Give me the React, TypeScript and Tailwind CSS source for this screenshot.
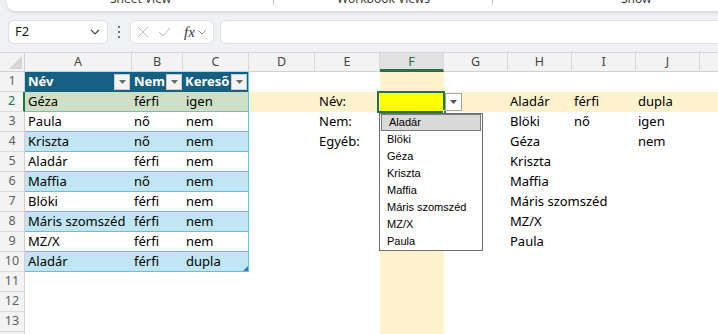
import clsx from "clsx";

const widths = [
  "w-[107px]",
  "w-[51px]",
  "w-[66px]",
  "w-[66px]",
  "w-[65px]",
  "w-[64px]",
  "w-[64px]",
  "w-[64px]",
  "w-[64px]",
  "w-[64px]",
  "w-[64px]",
];
const letters = ["A", "B", "C", "D", "E", "F", "G", "H", "I", "J", "K"];

const table = [
  ["Géza", "férfi", "igen"],
  ["Paula", "nő", "nem"],
  ["Kriszta", "nő", "nem"],
  ["Aladár", "férfi", "nem"],
  ["Maffia", "nő", "nem"],
  ["Blöki", "férfi", "nem"],
  ["Máris szomszéd", "férfi", "nem"],
  ["MZ/X", "férfi", "nem"],
  ["Aladár", "férfi", "dupla"],
];

const labels: Record<number, string> = { 2: "Név:", 3: "Nem:", 4: "Egyéb:" };
const names = ["Aladár", "Blöki", "Géza", "Kriszta", "Maffia", "Máris szomszéd", "MZ/X", "Paula"];
const colI: Record<number, string> = { 2: "férfi", 3: "nő" };
const colJ: Record<number, string> = { 2: "dupla", 3: "igen", 4: "nem" };

function Cell({ col, className, children }: { col: number; className?: string; children?: React.ReactNode }) {
  return (
    <div className={clsx("h-full shrink-0 flex items-center pl-[2px] whitespace-nowrap", widths[col], className)}>
      {children}
    </div>
  );
}

function FilterButton() {
  return (
    <span className="w-[16px] h-[16px] shrink-0 bg-[#f3f3f3] border border-[#cdcdcd] flex items-center justify-center">
      <svg width="7" height="4" viewBox="0 0 7 4">
        <path d="M0 0h7L3.5 4z" fill="#6b6b6b" />
      </svg>
    </span>
  );
}

function Row({ n }: { n: number }) {
  const inTable = n >= 2 && n <= 10;
  const data = inTable ? table[n - 2] : null;
  const band = n === 2 ? "bg-[#fff2cc]" : "";
  const tableBg =
    n === 2 ? "bg-[#cfdfc4]" : n % 2 === 0 ? "bg-[#c0e6f5]" : "bg-white";
  const tableCell = inTable ? clsx(tableBg, "border-b border-[#5fc0e8]") : "";

  return (
    <div className="flex h-[20px] shrink-0">
      <div
        className={clsx(
          "w-[25px] shrink-0 h-full bg-[#f3f3f3] border-b border-[#dcdcdc] flex items-center justify-center text-[12.5px]",
          n === 2 ? "border-r-2 border-r-[#217346] text-[#217346]" : "border-r border-r-[#d0d0d0] text-[#5f5f5f]"
        )}
      >
        {n}
      </div>
      {n === 1 ? (
        <>
          <Cell col={0} className="bg-[#156082] text-white font-bold justify-between pr-[2px] pl-[3px]">
            Név
            <FilterButton />
          </Cell>
          <Cell col={1} className="bg-[#156082] text-white font-bold justify-between pr-[1px]">
            Nem
            <FilterButton />
          </Cell>
          <Cell col={2} className="bg-[#156082] text-white font-bold justify-between pr-[1px] border-r border-[#5fc0e8]">
            Kereső
            <FilterButton />
          </Cell>
        </>
      ) : (
        <>
          <Cell col={0} className={clsx(tableCell, "pl-[3px]")}>{data?.[0]}</Cell>
          <Cell col={1} className={tableCell}>{data?.[1]}</Cell>
          <Cell
            col={2}
            className={clsx(tableCell, "pl-[3px] relative", inTable && "border-r border-r-[#5fc0e8]")}
          >
            {data?.[2]}
            {n === 10 && (
              <svg className="absolute right-0 bottom-0" width="5" height="5" viewBox="0 0 5 5">
                <path d="M5 0v5H0z" fill="#3b76c4" />
              </svg>
            )}
          </Cell>
        </>
      )}
      <Cell col={3} className={band} />
      <Cell col={4} className={clsx(band, "pl-[4px]")}>{labels[n]}</Cell>
      {n === 2 ? (
        <div className="w-[64px] shrink-0 h-full relative bg-[#ffff00]">
          <div className="absolute -left-[3px] -top-px -right-px -bottom-px border-2 border-[#217346]" />
          <div className="absolute right-[-3px] bottom-[-2px] w-[4px] h-[4px] bg-[#217346] border border-white" />
          <div className="absolute left-[65px] top-px w-[17px] h-[18px] bg-white border border-[#a6a6a6] flex items-center justify-center z-10">
            <svg width="7" height="4" viewBox="0 0 7 4">
              <path d="M0 0h7L3.5 4z" fill="#555" />
            </svg>
          </div>
        </div>
      ) : (
        <Cell col={5} className="bg-[#fff2cc]" />
      )}
      <Cell col={6} className={band} />
      <Cell col={7} className={band}>{names[n - 2]}</Cell>
      <Cell col={8} className={band}>{colI[n]}</Cell>
      <Cell col={9} className={band}>{colJ[n]}</Cell>
      <Cell col={10} className={band} />
    </div>
  );
}

export default function App() {
  return (
    <div className="w-[718px] h-[334px] overflow-hidden relative flex flex-col bg-[#eff1f4] font-['Noto_Sans',sans-serif] text-[13px] text-black">
      {/* ribbon group labels, cut off at the top */}
      <div className="h-[11px] shrink-0 ml-[7px] -mr-[40px] bg-white rounded-b-[8px] shadow-[0_2px_3px_rgba(0,0,0,0.1)] flex text-[12px] text-[#3c3c3c] overflow-hidden">
        <div className="w-[267px] relative flex justify-center">
          <span className="-mt-[9px] leading-[16px]">Sheet View</span>
          <span className="absolute right-0 top-0 h-[5px] border-r border-[#c4c4c4]" />
        </div>
        <div className="w-[219px] relative flex justify-center">
          <span className="-mt-[9px] leading-[16px]">Workbook Views</span>
          <span className="absolute right-0 top-0 h-[5px] border-r border-[#c4c4c4]" />
        </div>
        <div className="flex-1 pl-[128px]">
          <span className="block -mt-[9px] leading-[16px]">Show</span>
        </div>
      </div>

      {/* formula bar */}
      <div className="mt-[9px] h-[24px] shrink-0 flex items-center">
        <div className="ml-[8px] w-[100px] h-full bg-white rounded-[6px] border border-[#e1e1e1] flex items-center justify-between pl-[6px] pr-[7px]">
          <span className="text-[13px] text-[#1b1b1b]">F2</span>
          <svg width="10" height="6" viewBox="0 0 10 6">
            <path d="M1 1l4 4 4-4" fill="none" stroke="#424242" strokeWidth="1.1" />
          </svg>
        </div>
        <div className="w-[22px] h-full flex flex-col items-center justify-center gap-[3px]">
          <span className="w-[2px] h-[2px] rounded-full bg-[#424242]" />
          <span className="w-[2px] h-[2px] rounded-full bg-[#424242]" />
          <span className="w-[2px] h-[2px] rounded-full bg-[#424242]" />
        </div>
        <div className="w-[84px] h-full bg-white rounded-[6px] border border-[#e1e1e1] flex items-center pl-[6px]">
          <svg width="12" height="12" viewBox="0 0 12 12">
            <path d="M1 1l10 10M11 1L1 11" stroke="#bcbcbc" strokeWidth="1" />
          </svg>
          <svg className="ml-[9px]" width="13" height="10" viewBox="0 0 13 10">
            <path d="M1 5l4 4 7-8" fill="none" stroke="#bcbcbc" strokeWidth="1" />
          </svg>
          <span className="ml-[13px] font-['Liberation_Serif',serif] italic text-[15px] text-[#333] leading-none">
            fx
          </span>
          <svg className="ml-[3px]" width="8" height="5" viewBox="0 0 8 5">
            <path d="M0.5 0.5l3.5 3.5 3.5-3.5" fill="none" stroke="#8a8a8a" strokeWidth="1" />
          </svg>
        </div>
        <div className="ml-[6px] -mr-[10px] flex-1 h-full bg-white rounded-[6px] border border-[#e1e1e1]" />
      </div>

      {/* sheet */}
      <div className="mt-[8px] flex-1 bg-white flex flex-col">
        <div className="flex h-[20px] shrink-0 bg-[#f3f3f3] border-t border-[#d8d8d8] text-[12.5px] text-[#444]">
          <div className="w-[25px] shrink-0 h-full border-r border-b border-[#d0d0d0] relative">
            <svg className="absolute right-[2px] bottom-[2px]" width="13" height="13" viewBox="0 0 13 13">
              <path d="M13 0v13H0z" fill="#d6d6d6" />
            </svg>
          </div>
          {letters.map((l, i) => (
            <div
              key={l}
              className={clsx(
                "h-full shrink-0 flex items-center justify-center border-r border-[#d8d8d8]",
                widths[i],
                i === 5 ? "bg-[#e1e1e1] border-b-[3px] border-b-[#217346] text-[#217346] pt-[2px]" : "border-b border-b-[#d0d0d0]"
              )}
            >
              {l}
            </div>
          ))}
        </div>
        {Array.from({ length: 14 }, (_, i) => (
          <Row key={i} n={i + 1} />
        ))}
      </div>

      {/* data validation dropdown */}
      <div className="absolute left-[379px] top-[113px] w-[104px] bg-white border border-[#6d6d6d] py-0 font-['Liberation_Sans',sans-serif] text-[11px] text-black z-20">
        {names.map((name, i) => (
          <div
            key={name}
            className={clsx(
              "h-[17px] flex items-center pl-[7px]",
              i === 0 && "mx-px bg-[#d9d9d9] border border-[#7a7a7a] pl-[6px]"
            )}
          >
            {name}
          </div>
        ))}
      </div>
    </div>
  );
}
